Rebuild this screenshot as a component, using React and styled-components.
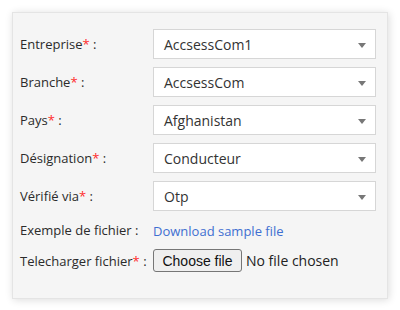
import React from "react";
import styled, { createGlobalStyle } from "styled-components";

const Global = createGlobalStyle`
  html, body { margin: 0; padding: 0; background: #ffffff; overflow: hidden; }
  body { font-family: "Open Sans", "Noto Sans", sans-serif; color: #333; }
`;

const Page = styled.div`
  padding: 12px;
  width: 400px;
  height: 310px;
  box-sizing: border-box;
`;

const Card = styled.div`
  width: 376px;
  height: 287px;
  box-sizing: border-box;
  background: #f5f5f5;
  border: 1px solid #e4e4e4;
  box-shadow: 1px 1px 8px rgba(0, 0, 0, 0.14);
  padding: 16px 11px 0 7px;
`;

const Form = styled.div`
  display: grid;
  grid-template-columns: 133px 223px;
  row-gap: 8px;
  align-items: center;
`;

const Label = styled.label`
  font-size: 13px;
  color: #2b2b2b;
  line-height: 18px;
`;

const Star = styled.span`
  color: #ff2b2b;
`;

const SelectBox = styled.div`
  position: relative;
  height: 30px;
  box-sizing: border-box;
  background: #fff;
  border: 1px solid #d6d6d6;
  display: flex;
  align-items: center;
  padding: 0 10px;
  font-size: 14px;
  color: #333;
`;

const Arrow = styled.span`
  position: absolute;
  right: 9px;
  top: 13px;
  width: 0;
  height: 0;
  border-left: 4px solid transparent;
  border-right: 4px solid transparent;
  border-top: 5px solid #777;
`;

const Link = styled.a`
  font-size: 13px;
  color: #3f6fd1;
  text-decoration: none;
  line-height: 20px;
`;

const FilePicker = styled.label`
  display: flex;
  align-items: center;
  gap: 4px;
  font-size: 14px;
  color: #222;
  input { display: none; }
`;

const ChooseButton = styled.span`
  display: inline-flex;
  align-items: center;
  justify-content: center;
  box-sizing: border-box;
  width: 89px;
  height: 23px;
  font-family: "Liberation Sans", Arial, sans-serif;
  font-size: 14px;
  color: #111;
  background: #efefef;
  border: 1px solid #767676;
  border-radius: 3px;
`;

const Field = ({ label, value }) => (
  <>
    <Label>
      {label}
      <Star>*</Star> :
    </Label>
    <SelectBox>
      {value}
      <Arrow />
    </SelectBox>
  </>
);

export default function App() {
  return (
    <Page>
      <Global />
      <Card>
        <Form>
          <Field label="Entreprise" value="AccsessCom1" />
          <Field label="Branche" value="AccsessCom" />
          <Field label="Pays" value="Afghanistan" />
          <Field label="Désignation" value="Conducteur" />
          <Field label="Vérifié via" value="Otp" />
          <Label>Exemple de fichier :</Label>
          <div>
            <Link href="#">Download sample file</Link>
          </div>
          <Label>
            Telecharger fichier<Star>*</Star> :
          </Label>
          <FilePicker>
            <input type="file" />
            <ChooseButton>Choose file</ChooseButton>
            <span>No file chosen</span>
          </FilePicker>
        </Form>
      </Card>
    </Page>
  );
}
